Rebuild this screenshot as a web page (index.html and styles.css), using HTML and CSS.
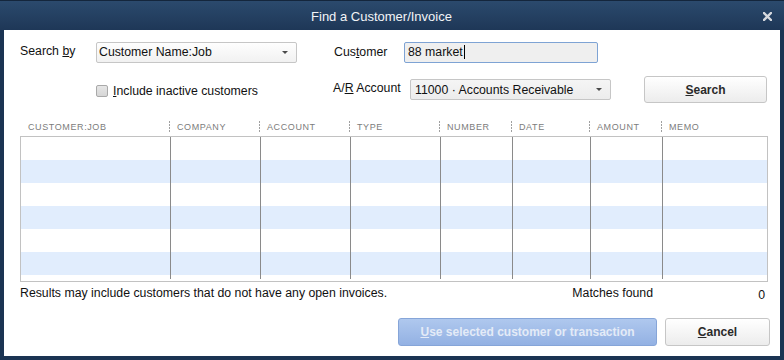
FILE: index.html
```html
<!DOCTYPE html>
<html>
<head>
<meta charset="utf-8">
<link rel="stylesheet" href="styles.css">
</head>
<body>
<div class="window">
  <div class="titlebar">
    <span class="title">Find a Customer/Invoice</span>
    <svg class="close" width="9" height="9" viewBox="0 0 9 9"><path d="M1 1 L8 8 M8 1 L1 8" stroke="#d6d9de" stroke-width="2.4" stroke-linecap="square"/></svg>
  </div>
  <div class="client">
    <div class="row row1">
      <span class="lbl lbl-searchby">Search <u>b</u>y</span>
      <div class="combo combo-searchby"><span class="combo-text">Customer Name:Job</span><span class="arrow"></span></div>
      <span class="lbl lbl-customer">Cus<u>t</u>omer</span>
      <div class="input"><span class="val">88 market</span><span class="caret"></span></div>
    </div>
    <div class="row row2">
      <div class="check"><span class="box"></span><span class="check-label"><u>I</u>nclude inactive customers</span></div>
      <span class="lbl lbl-ar">A/<u>R</u> Account</span>
      <div class="combo combo-ar"><span class="combo-text">11000 · Accounts Receivable</span><span class="arrow"></span></div>
      <button class="btn btn-search"><u>S</u>earch</button>
    </div>
    <div class="grid-head">
      <div class="hcell first">CUSTOMER:JOB</div>
      <div class="hcell">COMPANY</div>
      <div class="hcell">ACCOUNT</div>
      <div class="hcell">TYPE</div>
      <div class="hcell">NUMBER</div>
      <div class="hcell">DATE</div>
      <div class="hcell">AMOUNT</div>
      <div class="hcell">MEMO</div>
    </div>
    <div class="grid-body">
      <div class="col"></div>
      <div class="col"></div>
      <div class="col"></div>
      <div class="col"></div>
      <div class="col"></div>
      <div class="col"></div>
      <div class="col"></div>
      <div class="col last"></div>
    </div>
    <div class="info">
      <span class="note">Results may include customers that do not have any open invoices.</span>
      <span class="matches-label">Matches found</span>
      <span class="matches-count">0</span>
    </div>
    <div class="actions">
      <button class="btn btn-use"><u>U</u>se selected customer or transaction</button>
      <button class="btn btn-cancel"><u>C</u>ancel</button>
    </div>
  </div>
</div>
</body>
</html>
```

FILE: styles.css
```css
html, body {
  margin: 0;
  padding: 0;
}
body {
  font-family: "Liberation Sans", Arial, sans-serif;
  font-size: 12.3px;
  color: #111;
}
.window {
  width: 784px;
  height: 360px;
  background: #1b3453;
  display: flex;
  flex-direction: column;
  box-sizing: border-box;
}
.titlebar {
  height: 30px;
  flex: none;
  display: flex;
  align-items: center;
  background: linear-gradient(#2b4a6d, #1e3757);
  border-top: 1px solid #14263c;
  box-sizing: border-box;
}
.title {
  flex: 1;
  text-align: center;
  color: #f2f4f7;
  font-size: 13px;
  padding-top: 1px;
}
.close {
  margin-right: 12px;
  margin-top: 1px;
}
.client {
  flex: 1;
  margin: 0 4px 4px 4px;
  background: #fff;
  padding: 11px 12px 10px 16px;
  display: flex;
  flex-direction: column;
}
.row {
  display: flex;
  align-items: center;
}
.row1 {
  height: 22px;
}
.lbl-searchby {
  width: 76px;
  margin-top: -2px;
}
.combo {
  box-sizing: border-box;
  height: 21px;
  border: 1px solid #c6c6c6;
  border-radius: 2px;
  background: linear-gradient(#fefefe, #f1f1f1);
  display: flex;
  align-items: center;
  padding-left: 2px;
}
.combo-text {
  flex: 1;
  white-space: nowrap;
}
.arrow {
  width: 0;
  height: 0;
  border-left: 3px solid transparent;
  border-right: 3px solid transparent;
  border-top: 3px solid #4a4a4a;
  margin-right: 8px;
}
.combo-searchby {
  width: 201px;
}
.lbl-customer {
  margin-left: 37px;
  width: 70px;
}
.input {
  box-sizing: border-box;
  width: 194px;
  height: 21px;
  border: 1px solid #7ea3d4;
  border-radius: 2px;
  background: #efefef;
  display: flex;
  align-items: center;
  padding-left: 3px;
}
.caret {
  width: 1px;
  height: 14px;
  background: #000;
  margin-left: 1px;
}
.row2 {
  margin-top: 13px;
  height: 27px;
}
.check {
  margin-left: 76px;
  width: 237px;
  display: flex;
  align-items: center;
  padding-top: 2px;
}
.box {
  box-sizing: border-box;
  width: 12px;
  height: 12px;
  border: 1px solid #a9a9a9;
  border-radius: 2px;
  background: linear-gradient(#e6e6e6, #d6d6d6);
  margin-right: 5px;
}
.lbl-ar {
  width: 77px;
  margin-top: -3px;
}
.combo-ar {
  width: 201px;
  background: linear-gradient(#f5f5f5, #ececec);
  padding-left: 4px;
}
.btn {
  font-family: "Liberation Sans", Arial, sans-serif;
  font-size: 12px;
  font-weight: bold;
  box-sizing: border-box;
  border-radius: 3px;
  padding: 0;
  cursor: default;
}
.btn-search, .btn-cancel {
  background: linear-gradient(#ffffff, #ececec);
  border: 1px solid #c6c6c6;
  color: #2a2a2a;
}
.btn-search {
  margin-left: 33px;
  width: 123px;
  height: 27px;
}
.grid-head {
  margin-top: 14px;
  height: 19px;
  width: 748px;
  display: grid;
  grid-template-columns: 150px 90px 90px 90px 72px 78px 72px 1fr;
  align-items: center;
}
.hcell {
  position: relative;
  font-size: 9px;
  letter-spacing: 0.6px;
  color: #7c7c7c;
  padding-left: 7px;
  white-space: nowrap;
}
.hcell.first {
  padding-left: 8px;
}
.hcell:not(.first)::before {
  content: "";
  position: absolute;
  left: -1px;
  top: -1px;
  width: 1px;
  height: 11px;
  background: repeating-linear-gradient(to bottom, #a0a0a0 0 2px, transparent 2px 3px);
}
.grid-body {
  box-sizing: border-box;
  width: 748px;
  height: 146px;
  border: 1px solid #c2c2c2;
  background: repeating-linear-gradient(to bottom, #ffffff 0 23px, #e1edfd 23px 46px);
  display: grid;
  grid-template-columns: 150px 90px 90px 90px 72px 78px 72px 1fr;
  align-items: start;
}
.col {
  height: 142px;
  border-right: 1px solid #8a8a8a;
}
.col.last {
  border-right: none;
}
.info {
  margin-top: 4px;
  display: flex;
  align-items: flex-start;
  height: 16px;
}
.note {
  flex: 1;
}
.matches-count {
  width: 115px;
  text-align: right;
  padding-right: 3px;
  box-sizing: border-box;
  padding-top: 2px;
}
.actions {
  margin-top: auto;
  display: flex;
  justify-content: flex-end;
  gap: 8px;
  margin-right: -2px;
}
.btn-use {
  width: 259px;
  height: 28px;
  border: 1px solid #86a5d8;
  background: linear-gradient(#afc8ee, #93b1e3);
  color: #e4ebf7;
}
.btn-cancel {
  width: 105px;
  height: 28px;
}
```
